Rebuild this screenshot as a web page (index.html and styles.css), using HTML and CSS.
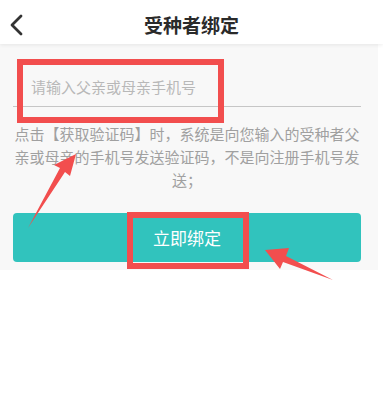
FILE: index.html
```html
<!DOCTYPE html>
<html lang="zh-CN">
<head>
<meta charset="utf-8">
<title>受种者绑定</title>
<link rel="stylesheet" href="styles.css">
</head>
<body>
<div class="page">
  <header class="topbar">
    <span class="back">
      <svg width="16" height="22" viewBox="0 0 16 22"><path d="M13 2 L4 11 L13 20" fill="none" stroke="#333" stroke-width="2.8" stroke-linecap="round" stroke-linejoin="round"/></svg>
    </span>
    <h1 class="title">受种者绑定</h1>
    <span class="spacer"></span>
  </header>
  <main class="content">
    <div class="field">
      <input class="phone" type="text" placeholder="请输入父亲或母亲手机号">
    </div>
    <p class="tip">点击【获取验证码】时，系统是向您输入的受种者父亲或母亲的手机号发送验证码，不是向注册手机号发送；</p>
    <button class="bind">立即绑定</button>
  </main>
  <div class="mark mark-input"></div>
  <div class="mark mark-button"></div>
  <svg class="arrows" width="383" height="420" viewBox="0 0 383 420">
    <polygon points="76,154 54,165 60,168 28,228 65,172 70,176" fill="#f24e4e"/>
    <polygon points="265,250 289,248 286,256 333,280 283,262 280,269" fill="#f24e4e"/>
  </svg>
</div>
</body>
</html>
```

FILE: styles.css
```css
html, body {
  margin: 0;
  padding: 0;
  background: #fff;
}
body {
  font-family: "Noto Sans CJK SC", "Noto Sans", sans-serif;
}
.page {
  position: relative;
  width: 383px;
  height: 420px;
  overflow: hidden;
}
.topbar {
  height: 44px;
  display: grid;
  grid-template-columns: 44px 1fr 44px;
  align-items: center;
  background: #fff;
  box-shadow: 0 1px 4px rgba(0,0,0,0.08);
  position: relative;
  z-index: 1;
}
.back {
  display: flex;
  align-items: center;
  padding-left: 8px;
  padding-top: 2px;
}
.title {
  margin: 0;
  text-align: center;
  font-size: 19px;
  font-weight: 600;
  color: #2a2a2a;
  line-height: 44px;
  padding-top: 3px;
}
.content {
  width: 348px;
  background: #f8f8f8;
  padding: 22px 17px 8px 13px;
}
.field {
  height: 40px;
  border-bottom: 1px solid #c6c6c6;
  display: flex;
  align-items: center;
}
.phone {
  border: 0;
  outline: 0;
  background: transparent;
  font-family: inherit;
  font-size: 15px;
  padding: 0 0 0 18px;
  width: 100%;
  color: #333;
}
.phone::placeholder {
  color: #b8b8b8;
}
.tip {
  margin: 15px 0 0;
  font-size: 15px;
  line-height: 23px;
  color: #a0a0a0;
  text-align: center;
}
.bind {
  display: block;
  width: 100%;
  height: 49px;
  margin-top: 22px;
  border: 0;
  border-radius: 4px;
  background: #31c3bd;
  color: #fff;
  font-family: inherit;
  font-size: 17px;
}
.mark {
  position: absolute;
  border: 6px solid #f24e4e;
  box-sizing: border-box;
}
.mark-input {
  left: 17px;
  top: 59px;
  width: 207px;
  height: 64px;
}
.mark-button {
  left: 127px;
  top: 212px;
  width: 122px;
  height: 57px;
}
.arrows {
  position: absolute;
  left: 0;
  top: 0;
  pointer-events: none;
}
```
